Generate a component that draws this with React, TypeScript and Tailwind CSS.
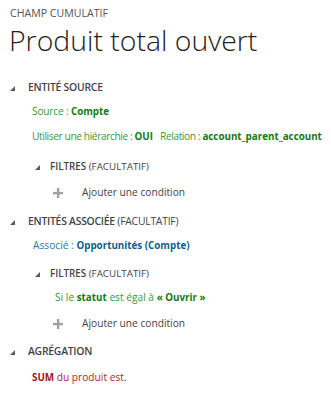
import React from "react";

function Tri() {
  return (
    <svg width="5" height="5" viewBox="0 0 5 5" className="shrink-0">
      <polygon points="5,0 5,5 0,5" fill="#5a5a5a" />
    </svg>
  );
}

function Plus() {
  return (
    <svg width="10" height="10" viewBox="0 0 10 10" className="shrink-0">
      <rect x="3.9" y="0" width="2.4" height="10" fill="#a0a0a0" />
      <rect x="0" y="3.9" width="10" height="2.4" fill="#a0a0a0" />
    </svg>
  );
}

function Header({ children, className }: { children: React.ReactNode; className: string }) {
  return (
    <div className={"flex h-5 items-center pl-[10px] " + className}>
      <Tri />
      <div className="ml-[13px] text-[10.4px] font-semibold tracking-[-0.25px] text-[#444444]">{children}</div>
    </div>
  );
}

function SubHeader({ className }: { className: string }) {
  return (
    <div className={"flex h-5 items-center pl-[35px] " + className}>
      <Tri />
      <div className="ml-[10px] text-[9.8px] text-[#444444]">
        <span className="font-semibold">FILTRES</span> (FACULTATIF)
      </div>
    </div>
  );
}

function AddCondition({ className }: { className: string }) {
  return (
    <div className={"flex h-5 items-center pl-[53px] " + className}>
      <Plus />
      <div className="ml-[19px] text-[10.2px] text-[#444444]">Ajouter une condition</div>
    </div>
  );
}

export default function App() {
  return (
    <div
      className="h-[413px] w-[331px] overflow-hidden bg-white whitespace-nowrap"
      style={{ fontFamily: '"Open Sans", "Noto Sans", sans-serif' }}
    >
      <div className="ml-[10px] mt-[5px] h-4 text-[10.6px] leading-4 text-[#555555]">CHAMP CUMULATIF</div>
      <div className="ml-[9px] mt-[3px] h-8 text-[28.4px] font-light leading-8 text-[#222222]">
        Produit total ouvert
      </div>

      <Header className="mt-[22px]">ENTITÉ SOURCE</Header>
      <div className="mt-1 flex h-5 items-center pl-[32px] text-[10.2px] tracking-[-0.2px] text-[#3a9a3a]">
        Source :&nbsp;<span className="text-[9.8px] font-bold tracking-normal text-[#127c12]">Compte</span>
      </div>
      <div className="mt-[5px] flex h-5 items-center pl-[32px] text-[10.2px] tracking-[-0.4px] text-[#3a9a3a]">
        Utiliser une hiérarchie :&nbsp;
        <span className="text-[9.8px] font-bold tracking-normal text-[#127c12]">OUI</span>
        <span className="ml-[7px]">Relation :&nbsp;</span>
        <span className="text-[9.8px] font-bold tracking-normal text-[#127c12]">account_parent_account</span>
      </div>
      <SubHeader className="mt-[10px]" />
      <AddCondition className="mt-[6px]" />

      <Header className="mt-[9px]">
        ENTITÉS ASSOCIÉE <span className="font-normal">(FACULTATIF)</span>
      </Header>
      <div className="mt-1 flex h-5 items-center pl-[33px] text-[10.2px] text-[#2a7aa6]">
        Associé :&nbsp;<span className="text-[9.8px] font-bold text-[#0f5f88]">Opportunités (Compte)</span>
      </div>
      <SubHeader className="mt-2" />
      <div className="mt-1 flex h-5 items-center pl-[55px] text-[10.2px] text-[#3a9a3a]">
        Si le&nbsp;<span className="text-[9.8px] font-bold text-[#127c12]">statut</span>&nbsp;est égal à&nbsp;
        <span className="text-[9.8px] font-bold text-[#127c12]">« Ouvrir »</span>
      </div>
      <AddCondition className="mt-[6px]" />

      <Header className="mt-2">AGRÉGATION</Header>
      <div className="mt-[6px] flex h-5 items-center pl-[32px] text-[10.2px] text-[#b0242a]">
        <span className="text-[9.8px] font-bold text-[#a3151c]">SUM</span>&nbsp;du produit est.
      </div>
    </div>
  );
}
